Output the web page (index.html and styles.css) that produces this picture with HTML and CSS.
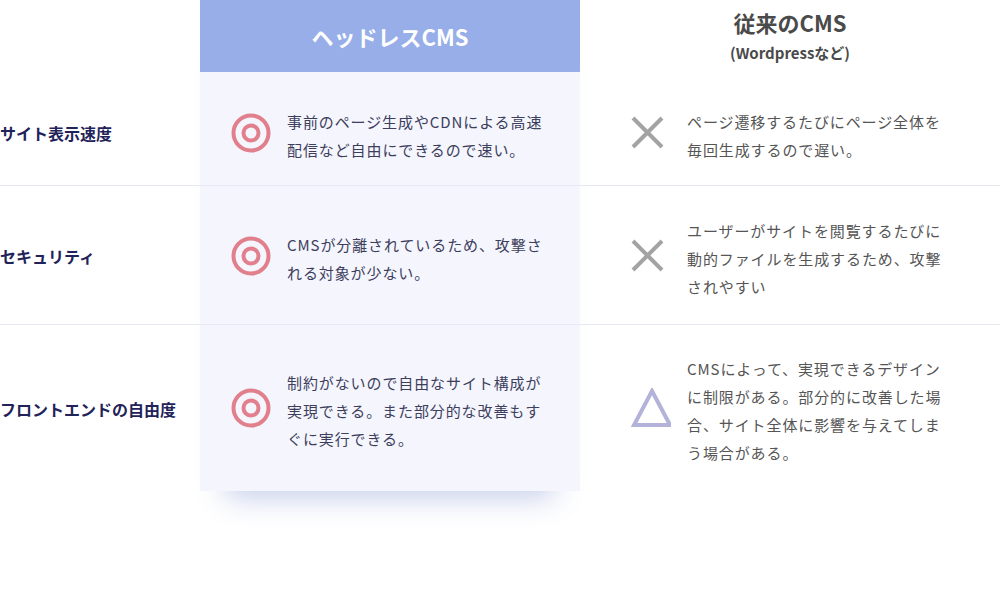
FILE: index.html
```html
<!DOCTYPE html>
<html lang="ja">
<head>
<meta charset="utf-8">
<title>ヘッドレスCMS 比較</title>
<link rel="stylesheet" href="styles.css">
</head>
<body>
<div class="compare">
  <div class="col-bg"></div>

  <div class="head head--headless"><span>ヘッドレスCMS</span></div>
  <div class="head head--legacy">
    <div class="legacy-title">従来のCMS</div>
    <div class="legacy-sub">(Wordpressなど)</div>
  </div>

  <div class="label r2 bordered">サイト表示速度</div>
  <div class="cell cell--headless r2 bordered">
    <div class="icon"><svg width="40" height="40" viewBox="0 0 40 40"><circle cx="20" cy="20" r="17.5" fill="none" stroke="#e27f8d" stroke-width="4"/><circle cx="20" cy="20" r="7.5" fill="none" stroke="#e27f8d" stroke-width="4"/></svg></div>
    <p class="text">事前のページ生成やCDNによる高速配信など自由にできるので速い。</p>
  </div>
  <div class="cell cell--legacy r2 bordered">
    <div class="icon"><svg width="40" height="40" viewBox="0 0 40 40"><path d="M2 5 L31 34 M31 5 L2 34" stroke="#a3a3a3" stroke-width="4" fill="none"/></svg></div>
    <p class="text">ページ遷移するたびにページ全体を毎回生成するので遅い。</p>
  </div>

  <div class="label r3 bordered">セキュリティ</div>
  <div class="cell cell--headless r3 bordered">
    <div class="icon"><svg width="40" height="40" viewBox="0 0 40 40"><circle cx="20" cy="20" r="17.5" fill="none" stroke="#e27f8d" stroke-width="4"/><circle cx="20" cy="20" r="7.5" fill="none" stroke="#e27f8d" stroke-width="4"/></svg></div>
    <p class="text">CMSが分離されているため、攻撃される対象が少ない。</p>
  </div>
  <div class="cell cell--legacy r3 bordered">
    <div class="icon"><svg width="40" height="40" viewBox="0 0 40 40"><path d="M2 5 L31 34 M31 5 L2 34" stroke="#a3a3a3" stroke-width="4" fill="none"/></svg></div>
    <p class="text">ユーザーがサイトを閲覧するたびに動的ファイルを生成するため、攻撃されやすい</p>
  </div>

  <div class="label r4">フロントエンドの自由度</div>
  <div class="cell cell--headless r4">
    <div class="icon"><svg width="40" height="40" viewBox="0 0 40 40"><circle cx="20" cy="20" r="17.5" fill="none" stroke="#e27f8d" stroke-width="4"/><circle cx="20" cy="20" r="7.5" fill="none" stroke="#e27f8d" stroke-width="4"/></svg></div>
    <p class="text">制約がないので自由なサイト構成が実現できる。また部分的な改善もすぐに実行できる。</p>
  </div>
  <div class="cell cell--legacy r4">
    <div class="icon"><svg width="40" height="40" viewBox="0 0 40 40"><path d="M21 3 L39 37 L3 37 Z" stroke="#b3b3da" stroke-width="4" fill="none" stroke-linejoin="miter"/></svg></div>
    <p class="text">CMSによって、実現できるデザインに制限がある。部分的に改善した場合、サイト全体に影響を与えてしまう場合がある。</p>
  </div>
</div>
</body>
</html>
```

FILE: styles.css
```css
html, body {
  margin: 0;
  padding: 0;
  background: #ffffff;
}

body {
  font-family: "Noto Sans CJK JP", "Noto Sans", sans-serif;
  width: 1000px;
  height: 596px;
  overflow: hidden;
}

.compare {
  display: grid;
  grid-template-columns: 200px 380px 420px;
  grid-template-rows: 72px auto auto auto;
}

.col-bg {
  grid-column: 2;
  grid-row: 1 / 5;
  background: #f4f5fd;
  box-shadow: 0 32px 28px -26px rgba(70, 100, 190, 0.32);
}

.head {
  grid-row: 1;
  display: flex;
  flex-direction: column;
  align-items: center;
  justify-content: center;
}

.head--headless {
  grid-column: 2;
  background: #97aee8;
  color: #ffffff;
  font-size: 22px;
  font-weight: 700;
}

.head--legacy {
  grid-column: 3;
  color: #4a4a4a;
  font-weight: 700;
  justify-content: flex-start;
}

.legacy-title {
  font-size: 22px;
  line-height: 30px;
  margin-top: 7px;
}

.legacy-sub {
  font-size: 15px;
  line-height: 20px;
  margin-top: 6px;
}

.r2 { grid-row: 2; }
.r3 { grid-row: 3; }
.r4 { grid-row: 4; }

.label {
  grid-column: 1;
  display: flex;
  align-items: center;
  font-size: 16px;
  font-weight: 700;
  color: #1f2359;
  padding-top: 2px;
}

.label.r2 { padding-top: 8px; }

.cell {
  display: flex;
  align-items: center;
  justify-content: center;
  gap: 16px;
}

.cell.r2 { padding: 36px 0 21px; }
.cell.r3 { padding: 31px 0 23px; }
.cell.r4 { padding: 30px 0 24px; }

.cell--headless { grid-column: 2; }
.cell--legacy { grid-column: 3; }

.bordered { border-bottom: 1px solid #e7e7f1; }
.cell--headless.bordered { border-bottom-color: #e8e9f5; }

.icon {
  width: 40px;
  height: 40px;
  flex: none;
  margin-top: -6px;
}

.icon svg { display: block; }

.text {
  margin: 0;
  width: 262px;
  font-size: 15px;
  line-height: 28px;
  letter-spacing: 0.06em;
}

.cell--headless .text { color: #3d3e5c; }
.cell--legacy .text { color: #555555; }
```
